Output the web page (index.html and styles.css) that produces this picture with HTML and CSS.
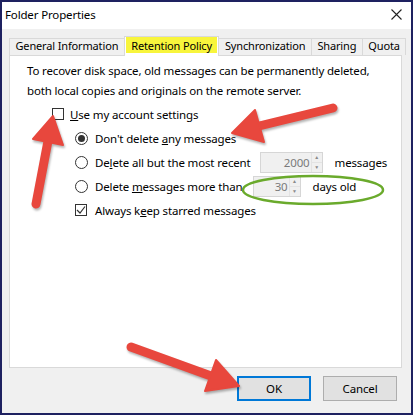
FILE: index.html
```html
<!DOCTYPE html>
<html lang="en">
<head>
    <meta charset="UTF-8">
    <title>Folder Properties</title>
    <link rel="stylesheet" href="styles.css">
</head>
<body>
    <div class="screen">
        <div class="window">
            <div class="titlebar">
                <span class="title">Folder Properties</span>
                <svg class="close" width="11" height="11" viewBox="0 0 11 11">
                    <path d="M0.5 0.5 L10.5 10.5 M10.5 0.5 L0.5 10.5" stroke="#222" stroke-width="1.1" fill="none"/>
                </svg>
            </div>
            <div class="body">
                <div class="tabs">
                    <div class="tab">General Information</div>
                    <div class="tab active"><span class="marker">Retention Policy</span></div>
                    <div class="tab">Synchronization</div>
                    <div class="tab">Sharing</div>
                    <div class="tab">Quota</div>
                </div>
                <div class="pane">
                    <p class="intro">To recover disk space, old messages can be permanently deleted,<br>both local copies and originals on the remote server.</p>
                    <div class="rows">
                        <div class="row lvl1">
                            <span class="check"></span>
                            <span><u>U</u>se my account settings</span>
                        </div>
                        <div class="row lvl2">
                            <span class="radio on"></span>
                            <span>Don't delete <u>a</u>ny messages</span>
                        </div>
                        <div class="row lvl2">
                            <span class="radio"></span>
                            <span>De<u>l</u>ete all but the most recent</span>
                            <span class="spin wide"><span class="val">2000</span><span class="arrows"><i>&#9650;</i><i>&#9660;</i></span></span>
                            <span>messages</span>
                        </div>
                        <div class="row lvl2">
                            <span class="radio"></span>
                            <span>Delete <u>m</u>essages more than</span>
                            <span class="spin"><span class="val">30</span><span class="arrows"><i>&#9650;</i><i>&#9660;</i></span></span>
                            <span>days old</span>
                        </div>
                        <div class="row lvl2">
                            <span class="check">
                                <svg width="10" height="10" viewBox="0 0 10 10"><path d="M1 5 L4 8 L9 1.5" stroke="#333" stroke-width="1.2" fill="none"/></svg>
                            </span>
                            <span>Always k<u>e</u>ep starred messages</span>
                        </div>
                    </div>
                </div>
                <div class="buttons">
                    <button class="btn default">OK</button>
                    <button class="btn">Cancel</button>
                </div>
            </div>
        </div>

        <!-- annotations drawn on top of the screenshot -->
        <svg class="overlay" width="413" height="415" viewBox="0 0 413 415">
            <ellipse cx="313" cy="190" rx="70" ry="14" fill="none" stroke="#6aaa2c" stroke-width="2.5"/>
            <g class="arrows-red">
                <line x1="333" y1="108" x2="259" y2="126"/>
                <polygon points="232,133 255,110 264,142"/>
                <line x1="36" y1="204" x2="48" y2="141"/>
                <polygon points="53,116 63,145 33,139"/>
                <line x1="131" y1="347" x2="211" y2="376"/>
                <polygon points="239,386 205,391 216,360"/>
            </g>
        </svg>
    </div>
</body>
</html>
```

FILE: styles.css
```css
body {
    margin: 0;
    font-family: "Noto Sans", "Open Sans", sans-serif;
    font-size: 11.5px;
    letter-spacing: -0.15px;
    color: #000;
    background: #fff;
}

.screen {
    position: relative;
    width: 413px;
    height: 415px;
}

.window {
    width: 413px;
    height: 415px;
    box-sizing: border-box;
    border: 2px solid #1e2160;
    background: #f0f0f0;
    display: flex;
    flex-direction: column;
}

.titlebar {
    height: 27px;
    box-sizing: border-box;
    background: #fff;
    display: flex;
    align-items: center;
    justify-content: space-between;
    padding: 0 9px 3px 3px;
}

.body {
    padding: 0 0 0 7px;
    display: flex;
    flex-direction: column;
}

/* tab strip */
.tabs {
    display: flex;
    align-items: flex-end;
    height: 19px;
    margin-top: 7px;
    font-size: 11px;
}

.tab {
    height: 17px;
    box-sizing: border-box;
    padding: 0 5.5px 3px;
    border: 1px solid #d9d9d9;
    border-bottom: none;
    margin-left: -1px;
    display: flex;
    align-items: center;
    white-space: nowrap;
}

.tab:first-child {
    margin-left: 0;
}

.tab.active {
    background: #fff;
    padding: 0 1.5px 3px;
    position: relative;
    z-index: 1;
    margin-bottom: -1px;
    height: 20px;
}

.marker {
    background: #f8f53c;
    padding: 0 5px;
    height: 16px;
    display: flex;
    align-items: center;
}

.pane {
    width: 393px;
    height: 313px;
    box-sizing: border-box;
    background: #fff;
    border: 1px solid #d9d9d9;
    padding: 5px 0 0 17px;
}

.intro {
    margin: 0;
    line-height: 20px;
}

.rows {
    display: flex;
    flex-direction: column;
    margin-top: 1px;
}

.row {
    height: 24px;
    display: flex;
    align-items: center;
    gap: 7px;
    white-space: nowrap;
}

.row.lvl1 {
    padding-left: 25px;
    gap: 6px;
}

.row.lvl2 {
    padding-left: 48px;
}

.check {
    width: 12px;
    height: 12px;
    box-sizing: border-box;
    border: 1px solid #333;
    display: flex;
    align-items: center;
    justify-content: center;
}

.lvl2 .check {
    margin-right: 1px;
}

.radio {
    width: 13px;
    height: 13px;
    box-sizing: border-box;
    border: 1px solid #333;
    border-radius: 50%;
    display: flex;
    align-items: center;
    justify-content: center;
}

.radio.on::after {
    content: "";
    width: 7px;
    height: 7px;
    border-radius: 50%;
    background: #333;
}

/* disabled spin boxes */
.spin {
    width: 48px;
    height: 21px;
    box-sizing: border-box;
    border: 1px solid #d6d6d6;
    background: #f0f0f0;
    display: flex;
    margin: 0 5px 0 3px;
    color: #7a7a7a;
}

.spin.wide {
    width: 63px;
    margin-left: 2px;
}

.spin .val {
    flex: 1;
    text-align: right;
    line-height: 19px;
    padding-right: 1px;
}

.spin .arrows {
    width: 10px;
    display: flex;
    flex-direction: column;
    border-left: 1px solid #e3e3e3;
}

.spin .arrows i {
    flex: 1;
    font-style: normal;
    font-size: 5px;
    line-height: 9px;
    text-align: center;
    color: #8a8a8a;
}

.spin .arrows i + i {
    border-top: 1px solid #e3e3e3;
}

.buttons {
    display: flex;
    justify-content: flex-end;
    gap: 12px;
    width: 388px;
    margin-top: 8px;
}

.btn {
    width: 74px;
    height: 25px;
    font-family: inherit;
    font-size: 11.5px;
    letter-spacing: -0.15px;
    color: #000;
    background: #e1e1e1;
    border: 1px solid #adadad;
    padding: 0;
}

.btn.default {
    border: 2px solid #0078d7;
}

.overlay {
    position: absolute;
    top: 0;
    left: 0;
    pointer-events: none;
}

.arrows-red {
    fill: #e8473d;
    stroke: #e8473d;
    filter: drop-shadow(1px 2px 1px rgba(0, 0, 0, 0.3));
}

.arrows-red line {
    stroke-width: 9;
    stroke-linecap: round;
}

.arrows-red polygon {
    stroke-width: 2;
    stroke-linejoin: round;
}
```
